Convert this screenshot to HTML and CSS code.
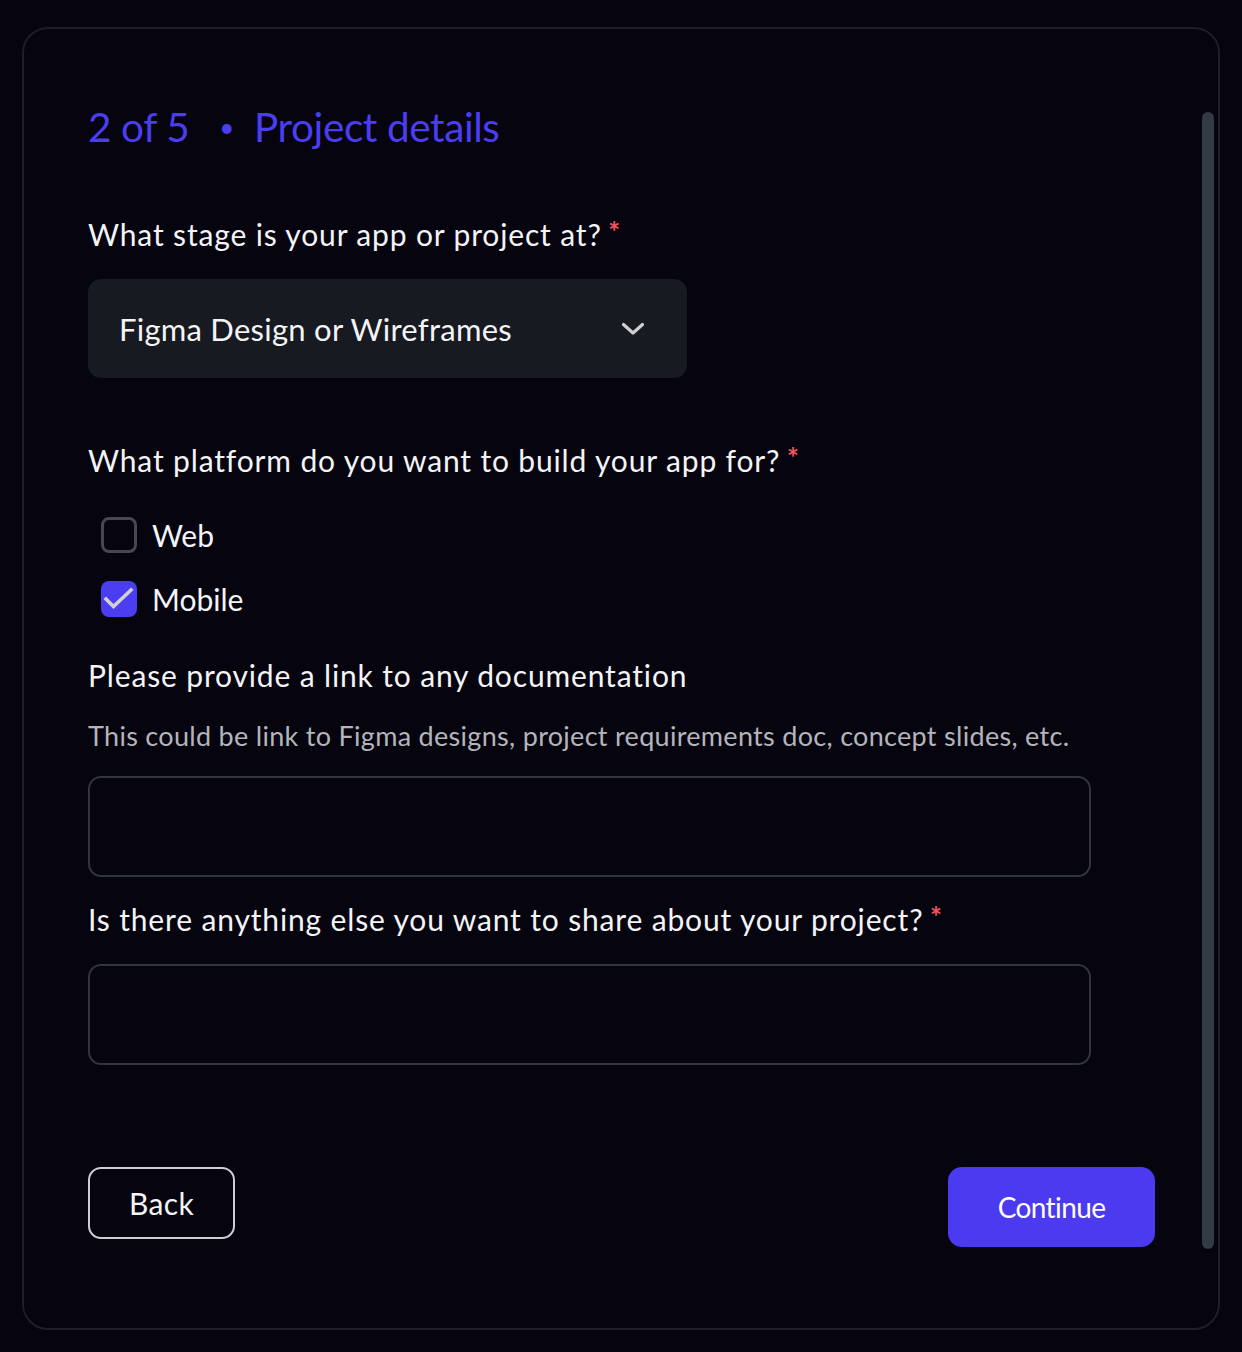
FILE: index.html
```html
<!DOCTYPE html>
<html lang="en">
<head>
<meta charset="utf-8">
<title>Project details</title>
<link rel="stylesheet" href="styles.css">
</head>
<body>
<div class="card">
  <div class="content">
    <h1 class="step"><span class="step-num">2 of 5</span><span class="step-dot">•</span><span>Project details</span></h1>

    <div class="field field-stage">
      <label class="label">What stage is your app or project at? <span class="req">*</span></label>
      <div class="select">
        <span class="select-text">Figma Design or Wireframes</span>
        <svg class="chevron" width="24" height="16" viewBox="0 0 24 16"><path d="M2.5 3.5 L12 12 L21.5 3.5" fill="none" stroke="#cfcfd2" stroke-width="3.2" stroke-linecap="round" stroke-linejoin="round"/></svg>
      </div>
    </div>

    <div class="field field-platform">
      <label class="label">What platform do you want to build your app for? <span class="req">*</span></label>
      <div class="checks">
        <div class="check-row"><span class="box"></span><span class="check-label">Web</span></div>
        <div class="check-row"><span class="box box-on"><svg width="36" height="36" viewBox="0 0 36 36"><path d="M5 18 L12.5 25.5 L30 9" fill="none" stroke="#d0d0d4" stroke-width="3.6" stroke-linecap="square"/></svg></span><span class="check-label">Mobile</span></div>
      </div>
    </div>

    <div class="field field-doc">
      <label class="label">Please provide a link to any documentation</label>
      <p class="helper">This could be link to Figma designs, project requirements doc, concept slides, etc.</p>
      <div class="input"></div>
    </div>

    <div class="field field-share">
      <label class="label">Is there anything else you want to share about your project? <span class="req">*</span></label>
      <div class="input"></div>
    </div>

    <div class="actions">
      <button class="btn-back">Back</button>
      <button class="btn-continue">Continue</button>
    </div>
  </div>
  <div class="scrolltrack"><div class="thumb"></div></div>
</div>
</body>
</html>
```

FILE: styles.css
```css
* { box-sizing: border-box; }
html, body { margin: 0; padding: 0; }
body {
  background: #05040f;
  font-family: Lato, "Open Sans", sans-serif;
  color: #f4f4f6;
  width: 1242px;
  height: 1352px;
  overflow: hidden;
}
.card {
  margin: 27px 22px 0 22px;
  height: 1303px;
  border: 2px solid #1e1e24;
  border-radius: 26px;
  display: flex;
}
.content {
  flex: 1;
  padding: 0 0 0 64px;
}
.step {
  margin: 0;
  padding-top: 71px;
  font-weight: 400;
  font-size: 40.5px;
  line-height: 54px;
  color: #4b3df0;
  display: flex;
  align-items: center;
  letter-spacing: -0.4px;
}
.step-dot {
  font-size: 26px;
  margin: 0 20px 0 30px;
}
.label {
  display: block;
  font-size: 30px;
  line-height: 40px;
  letter-spacing: 0.85px;
  color: #f4f4f6;
}
.req {
  color: #f2545e;
  font-size: 28px;
  line-height: 0;
  font-weight: 700;
  vertical-align: 4px;
  letter-spacing: 0;
  margin-left: -2px;
}
.field-stage { margin-top: 60px; }
.select {
  margin-top: 25px;
  width: 599px;
  height: 99px;
  background: #181a21;
  border-radius: 13px;
  display: flex;
  align-items: center;
  justify-content: space-between;
  padding: 0 42px 0 31px;
}
.select-text {
  font-size: 31px;
  letter-spacing: 0.25px;
  color: #f4f4f6;
}
.chevron { display: block; }
.field-platform { margin-top: 62px; }
.checks {
  margin-top: 37px;
  padding-left: 13px;
  display: flex;
  flex-direction: column;
  gap: 28px;
}
.check-row {
  display: flex;
  align-items: center;
  gap: 15px;
  height: 36px;
}
.box {
  width: 36px;
  height: 36px;
  border: 3px solid #47474f;
  border-radius: 8px;
  display: block;
}
.box-on {
  background: #4b3df0;
  border: none;
}
.box-on svg { display: block; }
.check-label {
  font-size: 30px;
  letter-spacing: 0;
  color: #f4f4f6;
}
.field-doc { margin-top: 38px; }
.helper {
  margin: 23px 0 0 0;
  font-size: 27px;
  line-height: 36px;
  letter-spacing: 0.3px;
  color: #b4b4ba;
}
.input {
  width: 1003px;
  height: 101px;
  border: 2px solid #30343d;
  border-radius: 13px;
}
.field-doc .input { margin-top: 22px; }
.field-share { margin-top: 22px; }
.field-share .input { margin-top: 25px; }
.actions {
  margin-top: 102px;
  display: flex;
  justify-content: space-between;
  align-items: flex-start;
  width: 1067px;
}
.btn-back {
  width: 147px;
  height: 72px;
  background: transparent;
  border: 2px solid #cdcdd2;
  border-radius: 13px;
  color: #f4f4f6;
  font-family: inherit;
  font-size: 30px;
  letter-spacing: 0.4px;
  padding: 0;
}
.btn-continue {
  width: 207px;
  height: 80px;
  background: #4b3af0;
  border: none;
  border-radius: 14px;
  color: #ffffff;
  font-family: inherit;
  font-size: 28px;
  letter-spacing: -0.6px;
  padding: 0;
}
.scrolltrack {
  width: 12px;
  margin: 83px 4px 0 0;
}
.thumb {
  width: 12px;
  height: 1137px;
  background: #323a46;
  border-radius: 6px;
}
```
